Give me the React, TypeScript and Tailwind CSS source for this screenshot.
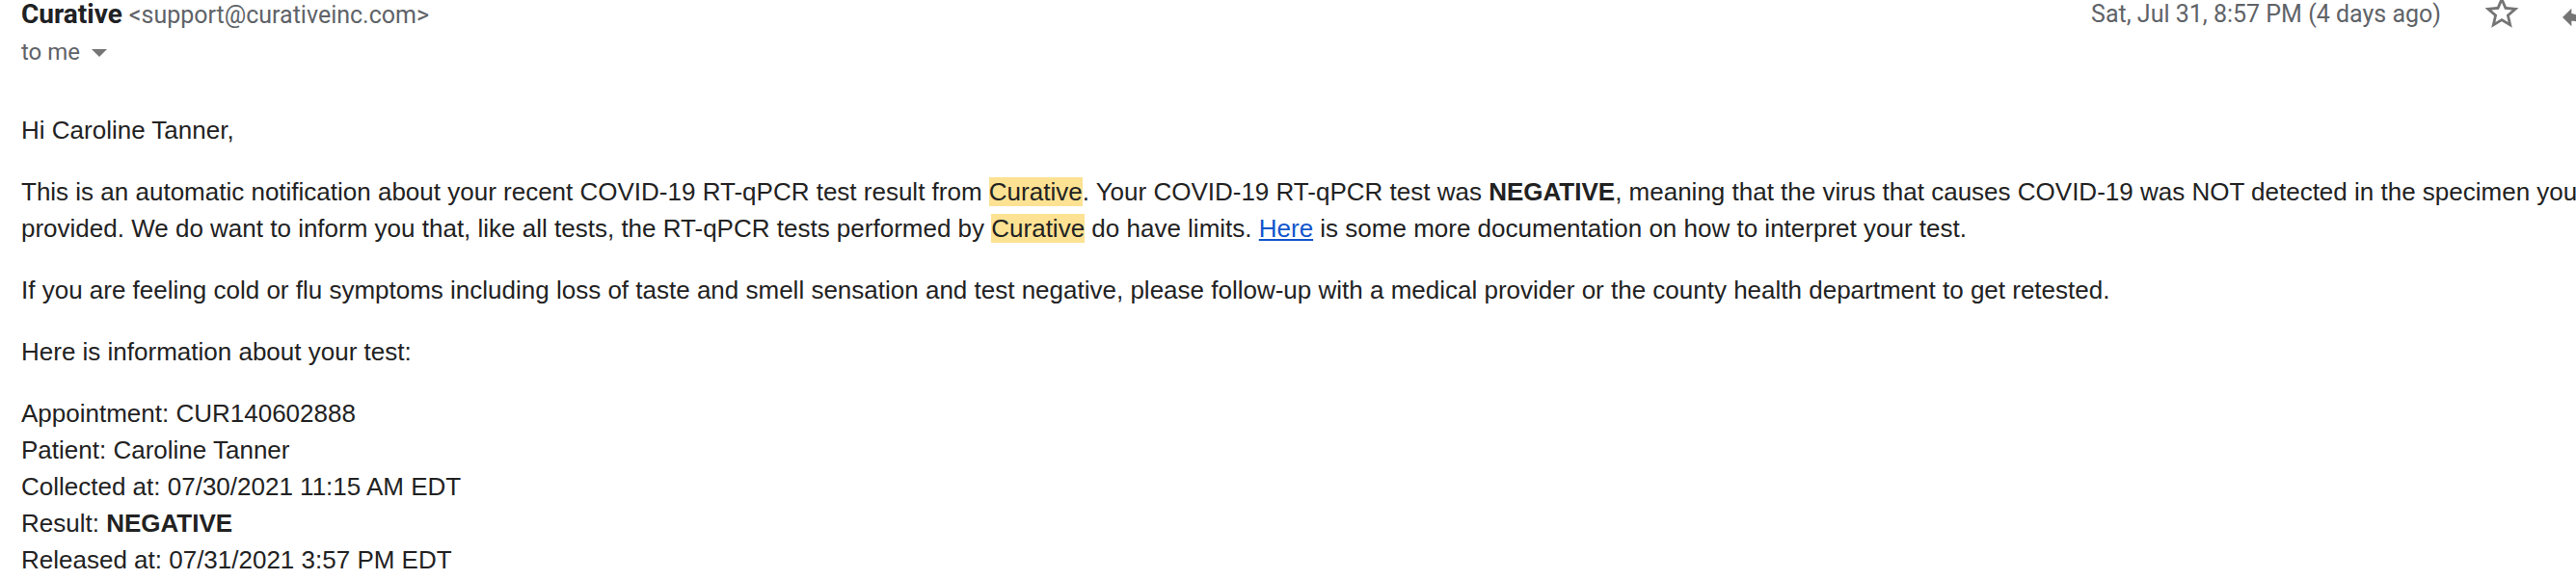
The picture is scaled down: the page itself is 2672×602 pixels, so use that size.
import React from "react";

function StarIcon() {
  return (
    <svg viewBox="0 0 24 24" className="h-[42px] w-[42px] fill-[#757575]">
      <path d="M22 9.24l-7.19-.62L12 2 9.19 8.63 2 9.24l5.46 4.73L5.82 21 12 17.27 18.18 21l-1.63-7.03L22 9.24zM12 15.4l-3.76 2.27 1-4.28-3.32-2.88 4.38-.38L12 6.1l1.71 4.04 4.38.38-3.32 2.88 1 4.28L12 15.4z" />
    </svg>
  );
}

function ReplyIcon() {
  return (
    <svg viewBox="0 0 24 24" className="h-[32px] w-[32px] fill-[#757575]">
      <path d="M10 9V5l-7 7 7 7v-4.1c5 0 8.5 1.6 11 5.1-1-5-4-10-11-11z" />
    </svg>
  );
}

function Hl({ children }: { children: React.ReactNode }) {
  return <span className="bg-[#fde293]">{children}</span>;
}

export default function App() {
  return (
    <div className="h-[602px] w-[2672px] overflow-hidden bg-white">
      <header className="flex items-start pl-[22px] font-['Roboto',sans-serif]">
        <div>
          <div className="flex h-[30px] items-baseline leading-[30px]">
            <span className="text-[28px] font-bold text-[#202124]">Curative</span>
            <span className="ml-[7px] text-[25px] text-[#5f6368]">
              &lt;support@curativeinc.com&gt;
            </span>
          </div>
          <div className="mt-[10px] flex h-[28px] items-center text-[24px] leading-[28px] text-[#5f6368]">
            <span>to me</span>
            <span className="ml-[12px] mt-[2px] h-0 w-0 border-x-[8px] border-t-[8px] border-x-transparent border-t-[#757575]" />
          </div>
        </div>
        <div className="-mr-[14px] ml-auto flex items-start">
          <span className="h-[30px] text-[25px] leading-[30px] text-[#5f6368]">
            Sat, Jul 31, 8:57 PM (4 days ago)
          </span>
          <span className="-mt-[8px] ml-[42px]">
            <StarIcon />
          </span>
          <span className="ml-[38px] mt-[2px]">
            <ReplyIcon />
          </span>
        </div>
      </header>

      <main className="mt-[48px] flex flex-col gap-[26px] whitespace-nowrap pl-[22px] font-['Liberation_Sans',Arial,sans-serif] text-[26px] leading-[38px] text-[#222222]">
        <p>Hi Caroline Tanner,</p>
        <p>
          This is an automatic notification about your recent COVID-19 RT-qPCR test result from{" "}
          <Hl>Curative</Hl>. Your COVID-19 RT-qPCR test was <b>NEGATIVE</b>, meaning that the virus
          that causes COVID-19 was NOT detected in the specimen you
          <br />
          provided. We do want to inform you that, like all tests, the RT-qPCR tests performed by{" "}
          <Hl>Curative</Hl> do have limits.{" "}
          <a href="#" className="text-[#1155cc] underline">
            Here
          </a>{" "}
          is some more documentation on how to interpret your test.
        </p>
        <p>
          If you are feeling cold or flu symptoms including loss of taste and smell sensation and
          test negative, please follow-up with a medical provider or the county health department to
          get retested.
        </p>
        <p>Here is information about your test:</p>
        <div>
          <div>Appointment: CUR140602888</div>
          <div>Patient: Caroline Tanner</div>
          <div>Collected at: 07/30/2021 11:15 AM EDT</div>
          <div>
            Result: <b>NEGATIVE</b>
          </div>
          <div>Released at: 07/31/2021 3:57 PM EDT</div>
        </div>
      </main>
    </div>
  );
}
